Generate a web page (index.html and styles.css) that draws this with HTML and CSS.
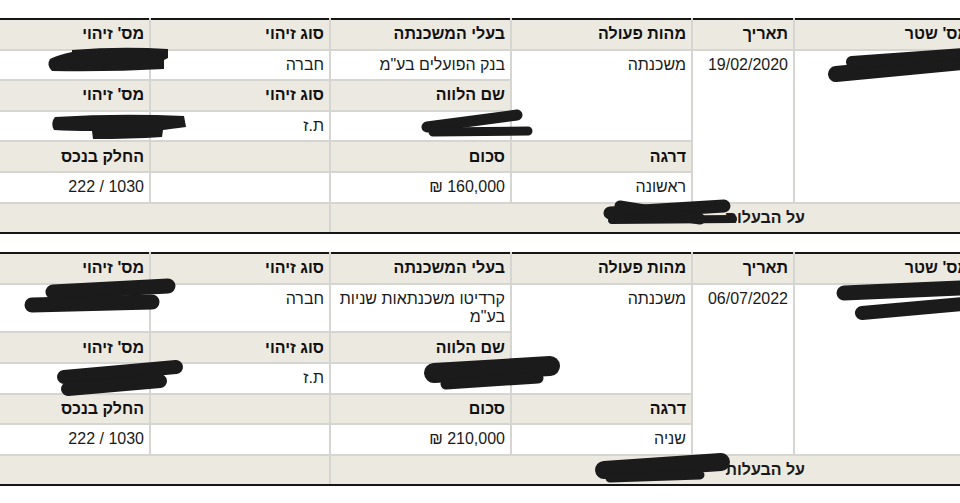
FILE: index.html
```html
<!DOCTYPE html>
<html lang="he" dir="rtl">
    <head>
        <meta charset="utf-8">
        <title>פרטי משכנתאות</title>
        <link rel="stylesheet" href="styles.css">
    </head>
    <body>
        <div class="page">
            <!-- משכנתה ראשונה -->
            <table class="deed">
                <colgroup>
                    <col class="c-shtar"><col class="c-date"><col class="c-action"><col class="c-owner"><col class="c-idtype"><col class="c-id">
                </colgroup>
                <tr>
                    <th>מס' שטר</th>
                    <th>תאריך</th>
                    <th>מהות פעולה</th>
                    <th>בעלי המשכנתה</th>
                    <th>סוג זיהוי</th>
                    <th>מס' זיהוי</th>
                </tr>
                <tr>
                    <td rowspan="5"></td>
                    <td rowspan="5">19/02/2020</td>
                    <td rowspan="3">משכנתה</td>
                    <td>בנק הפועלים בע"מ</td>
                    <td>חברה</td>
                    <td></td>
                </tr>
                <tr>
                    <th>שם הלווה</th>
                    <th>סוג זיהוי</th>
                    <th>מס' זיהוי</th>
                </tr>
                <tr>
                    <td></td>
                    <td>ת.ז</td>
                    <td></td>
                </tr>
                <tr>
                    <th>דרגה</th>
                    <th>סכום</th>
                    <th></th>
                    <th>החלק בנכס</th>
                </tr>
                <tr>
                    <td>ראשונה</td>
                    <td>160,000 ₪</td>
                    <td></td>
                    <td>1030 / 222</td>
                </tr>
                <tr class="foot">
                    <td colspan="4" class="ownership">על הבעלות</td>
                    <td colspan="2"></td>
                </tr>
            </table>

            <!-- משכנתה שנייה -->
            <table class="deed">
                <colgroup>
                    <col class="c-shtar"><col class="c-date"><col class="c-action"><col class="c-owner"><col class="c-idtype"><col class="c-id">
                </colgroup>
                <tr>
                    <th>מס' שטר</th>
                    <th>תאריך</th>
                    <th>מהות פעולה</th>
                    <th>בעלי המשכנתה</th>
                    <th>סוג זיהוי</th>
                    <th>מס' זיהוי</th>
                </tr>
                <tr>
                    <td rowspan="5"></td>
                    <td rowspan="5">06/07/2022</td>
                    <td rowspan="3">משכנתה</td>
                    <td>קרדיטו משכנתאות שניות בע"מ</td>
                    <td>חברה</td>
                    <td></td>
                </tr>
                <tr>
                    <th>שם הלווה</th>
                    <th>סוג זיהוי</th>
                    <th>מס' זיהוי</th>
                </tr>
                <tr>
                    <td></td>
                    <td>ת.ז</td>
                    <td></td>
                </tr>
                <tr>
                    <th>דרגה</th>
                    <th>סכום</th>
                    <th></th>
                    <th>החלק בנכס</th>
                </tr>
                <tr>
                    <td>שניה</td>
                    <td>210,000 ₪</td>
                    <td></td>
                    <td>1030 / 222</td>
                </tr>
                <tr class="foot">
                    <td colspan="4" class="ownership">על הבעלות</td>
                    <td colspan="2"></td>
                </tr>
            </table>

            <!-- השחרות בטוש מעל הפרטים האישיים -->
            <svg class="marker" width="960" height="503" viewBox="0 0 960 503">
                <g fill="#1b1b1b">
                    <path d="M72,50 Q120,46 168,49 L168,58 L164,60 L164,69 Q110,72 52,71 Q46,65 50,59 Q58,55 72,52 Z"/>
                    <path d="M55,117 Q120,113 184,116 L186,127 Q170,129 163,130 L162,137 Q130,139 93,139 L92,131 Q70,131 54,130 Q50,123 55,117 Z"/>
                </g>
                <g stroke="#1b1b1b" stroke-linecap="round" fill="none">
                    <path d="M427,127 L517,115" stroke-width="11"/>
                    <path d="M433,132 L528,131" stroke-width="9"/>
                    <path d="M836,74 L962,62" stroke-width="16"/>
                    <path d="M852,62 L962,54" stroke-width="12"/>
                    <path d="M610,213 L724,206" stroke-width="13"/>
                    <path d="M612,220 L733,219" stroke-width="8"/>
                    <path d="M620,206 L700,219" stroke-width="11"/>

                    <path d="M53,292 L168,286" stroke-width="15"/>
                    <path d="M32,305 L152,302" stroke-width="15"/>
                    <path d="M64,377 L176,367" stroke-width="14"/>
                    <path d="M68,389 L160,381" stroke-width="14"/>
                    <path d="M434,373 L550,366" stroke-width="20"/>
                    <path d="M446,384 L538,378" stroke-width="11"/>
                    <path d="M844,293 L962,288" stroke-width="15"/>
                    <path d="M862,313 L962,304" stroke-width="14"/>
                    <path d="M604,470 L721,462" stroke-width="18"/>
                    <path d="M610,478 L700,475" stroke-width="9"/>
                </g>
            </svg>
        </div>
    </body>
</html>
```

FILE: styles.css
```css
body {
    margin: 0;
    background: #fff;
    color: #1a1a1a;
    font-family: "Liberation Sans", Arial, "DejaVu Sans", sans-serif;
    font-size: 16px;
}
.page {
    position: relative;
    width: 960px;
    height: 503px;
    overflow: hidden;
    padding-top: 18px;
    box-sizing: border-box;
}
.deed {
    width: 1016px;
    margin-right: -16px;
    margin-bottom: 18px;
    border-collapse: collapse;
    table-layout: fixed;
}
.c-shtar { width: 181px; }
.c-date { width: 102px; }
.c-action { width: 181px; }
.c-owner { width: 181px; }
.c-idtype { width: 180px; }
.c-id { width: 191px; }

.deed th, .deed td {
    border: 2px solid #d5d5d1;
    padding: 5.3px 5px;
    text-align: right;
}
.deed th {
    background: #ece9e1;
    font-weight: 700;
    color: #111;
    vertical-align: middle;
}
.deed td {
    vertical-align: top;
    font-weight: 400;
}
.deed tr:first-child th {
    border-top: 2px solid #161616;
}
.deed .foot td {
    background: #ece9e1;
    border-bottom: 2px solid #161616;
    vertical-align: middle;
}
.deed .ownership {
    font-weight: 700;
    padding-right: 169px;
}
.marker {
    position: absolute;
    top: 0;
    left: 0;
    pointer-events: none;
}
```
